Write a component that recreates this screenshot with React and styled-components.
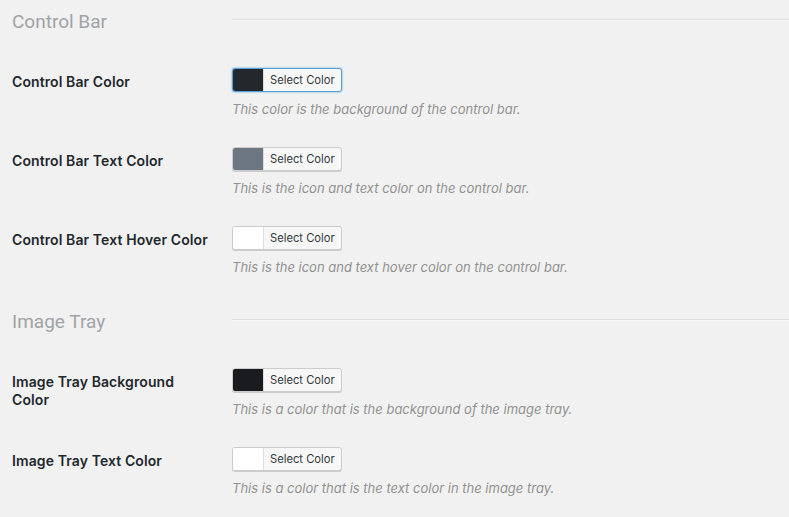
import React from "react";
import styled, { createGlobalStyle } from "styled-components";

const GlobalStyle = createGlobalStyle`
  body {
    margin: 0;
    background: #f1f1f1;
    font-family: Inter, "Liberation Sans", Arial, sans-serif;
    color: #23282d;
  }
`;

const Page = styled.div`
  padding: 9px 0 0 12px;
  overflow: hidden;
`;

const Section = styled.section`
  & + & {
    margin-top: 33px;
  }
`;

const SectionHead = styled.div`
  display: grid;
  grid-template-columns: 220px 1fr;
  align-items: center;
  height: 26px;
`;

const SectionTitle = styled.h2`
  margin: 0;
  font-family: Roboto, Inter, sans-serif;
  font-size: 19px;
  font-weight: 400;
  color: #a0a3a6;
  line-height: 26px;
`;

const Rule = styled.hr`
  margin: 0 0 4px;
  border: 0;
  border-top: 1px solid #dcdcdc;
  border-bottom: 1px solid #fafafa;
`;

const Rows = styled.div`
  display: grid;
  grid-template-columns: 220px 1fr;
  row-gap: 29px;
  margin-top: 33px;
`;

const Label = styled.div`
  font-size: 14px;
  font-weight: 600;
  line-height: 18px;
  letter-spacing: 0.1px;
  padding-top: 5px;
  padding-right: 22px;
`;

const Field = styled.div`
  display: flex;
  flex-direction: column;
  align-items: flex-start;
`;

const ColorButton = styled.button`
  display: flex;
  align-items: stretch;
  height: 24px;
  padding: 0;
  border: 1px solid ${(p) => (p.$focused ? "#5b9dd9" : "#ccc")};
  border-radius: 3px;
  background: #f7f7f7;
  box-shadow: ${(p) =>
    p.$focused ? "0 0 2px rgba(30,140,190,0.8)" : "0 1px 0 #ccc"};
  overflow: hidden;
  cursor: pointer;
  font-family: inherit;
`;

const Swatch = styled.span`
  width: 30px;
  background: ${(p) => p.$color};
  border-right: 1px solid #ddd;
`;

const ButtonText = styled.span`
  display: flex;
  align-items: center;
  padding: 0 6px;
  font-size: 11.2px;
  color: #32373c;
`;

const Description = styled.p`
  margin: 8px 0 0;
  font-size: 13px;
  line-height: 18px;
  font-style: italic;
  color: #929292;
`;

const sections = [
  {
    title: "Control Bar",
    rows: [
      {
        label: "Control Bar Color",
        color: "#23282d",
        focused: true,
        desc: "This color is the background of the control bar.",
      },
      {
        label: "Control Bar Text Color",
        color: "#6c7781",
        desc: "This is the icon and text color on the control bar.",
      },
      {
        label: "Control Bar Text Hover Color",
        color: "#ffffff",
        desc: "This is the icon and text hover color on the control bar.",
      },
    ],
  },
  {
    title: "Image Tray",
    rows: [
      {
        label: "Image Tray Background Color",
        color: "#191b1f",
        desc: "This is a color that is the background of the image tray.",
      },
      {
        label: "Image Tray Text Color",
        color: "#ffffff",
        desc: "This is a color that is the text color in the image tray.",
      },
    ],
  },
];

const App = () => {
  return (
    <>
      <GlobalStyle />
      <Page>
        {sections.map((s) => (
          <Section key={s.title}>
            <SectionHead>
              <SectionTitle>{s.title}</SectionTitle>
              <Rule />
            </SectionHead>
            <Rows>
              {s.rows.map((r) => (
                <React.Fragment key={r.label}>
                  <Label>{r.label}</Label>
                  <Field>
                    <ColorButton $focused={r.focused}>
                      <Swatch $color={r.color} />
                      <ButtonText>Select Color</ButtonText>
                    </ColorButton>
                    <Description>{r.desc}</Description>
                  </Field>
                </React.Fragment>
              ))}
            </Rows>
          </Section>
        ))}
      </Page>
    </>
  );
};

export default App;
